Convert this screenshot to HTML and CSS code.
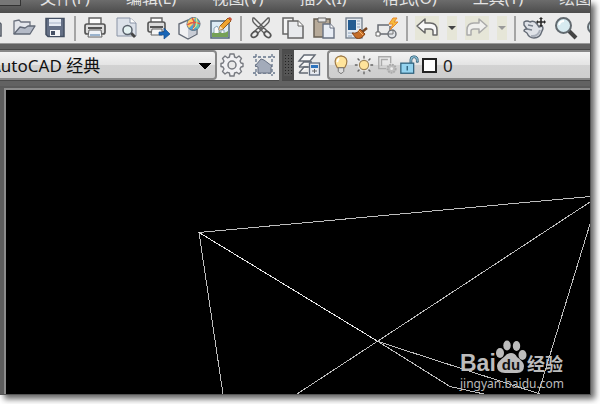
FILE: index.html
```html
<!DOCTYPE html>
<html lang="zh-CN">
<head>
<meta charset="utf-8">
<title>AutoCAD 经典</title>
<link rel="stylesheet" href="styles.css">
</head>
<body>
<main class="window">
  <nav class="menu">
    <span class="menu-handle"></span>
    <a href="#">文件(F)</a><a href="#">编辑(E)</a><a href="#">视图(V)</a><a href="#">插入(I)</a><a href="#">格式(O)</a><a href="#">工具(T)</a><a href="#">绘图(D)</a>
  </nav>

  <div class="toolbar">
    <div class="group group-file">
      <button aria-label="新建"><svg viewBox="0 0 24 24"><path d="M8 3h8l5 5v12H8z" fill="#d8dce2" stroke="#535a66" stroke-width="1.5"/></svg></button>
      <button aria-label="打开"><svg viewBox="0 0 24 24"><path d="M2 18V5l5-1 2 2h9v5" fill="#e4e6ec" stroke="#6d7380" stroke-width="1.3"/><path d="M2 18 8 11l5 1 3-2h7l-5 8z" fill="#b4bac7" stroke="#626977" stroke-width="1.3" stroke-linejoin="round"/></svg></button>
      <button aria-label="保存"><svg viewBox="0 0 24 24"><path d="M3 2.500h18v18H5l-2-2z" fill="#657086" stroke="#444f62" stroke-width="1.5"/><path d="M6 3h12v7H6z" fill="#e6ebf3"/><path d="M6 7h12" stroke="#a9b4c8"/><path d="M7 14h10v6H7z" fill="#f4f5f7"/><path d="M8 15h4v4H8z" fill="#465165"/></svg></button>
    </div>
    <i class="sep"></i>
    <div class="group group-output">
      <button aria-label="打印"><svg viewBox="0 0 24 24"><path d="M6 10V2h12v8" fill="#fcfcfc" stroke="#646464" stroke-width="1.4"/><rect x="2" y="8" width="20" height="10" rx="2" fill="#dedede" stroke="#555" stroke-width="1.7"/><path d="M5 12h14" stroke="#555" stroke-width="2"/><path d="M6 14h12l1 7H5z" fill="#f1f4f8" stroke="#626262"/><path d="M7 18h10v2H7z" fill="#9bb4ce"/></svg></button>
      <button aria-label="打印预览"><svg viewBox="0 0 24 24"><path d="M2 2h13l6 5v13H2z" fill="#dce1e9" stroke="#8993a5"/><path d="M15 2v5h6" fill="#fff" stroke="#8993a5"/><path d="m16 17 4 4" stroke="#444" stroke-width="2.800"/><circle cx="12.500" cy="14" r="4.500" fill="#e4f1f1" stroke="#59616b" stroke-width="1.500"/></svg></button>
      <button aria-label="发布"><svg viewBox="0 0 24 24"><path d="M5 7V2h11v5" fill="#fff" stroke="#666" stroke-width="1.400"/><rect x="2" y="6" width="17" height="10" rx="2" fill="#dcdcdc" stroke="#555" stroke-width="1.600"/><path d="M4 11h13" stroke="#555" stroke-width="2"/><path d="M6 13h10v6H5z" fill="#f6f6f6" stroke="#666"/><path d="M13 16h5v-4l6 6-6 5v-4h-5z" fill="#1765b7" stroke="#174f8d" stroke-width=".7"/></svg></button>
      <button aria-label="三维打印"><svg viewBox="0 0 24 24"><path d="m1 8 9-4 9 5v9l-9 5-9-5z" fill="#f1f1f3" stroke="#666d79" stroke-width="1.400"/><path d="M10 12v10l8-4v-8z" fill="#c8ccd5"/><circle cx="15.500" cy="8" r="6.500" fill="#4ea2d5" stroke="#567588"/><path d="M10 5q4-4 7-3l-2 6-4 4-2-3z" fill="#ffcd65"/><path d="m18 2 4 5-2 6-5-3z" fill="#65c6b1"/><path d="M9 9q7-5 13-1M14 2q4 5 1 12" fill="none" stroke="#de5747" stroke-width="1.400"/><path d="M18 2q3 7-3 11" fill="none" stroke="#fff27a"/></svg></button>
      <button aria-label="标记"><svg viewBox="0 0 24 24"><rect x="2" y="5" width="18" height="17" fill="#dcebf5" stroke="#526778" stroke-width="1.500"/><path d="M3 17q5-3 9-1t7-1v6H3z" fill="#75a157"/><path d="M5 17v-5l3-2 2 3v4m2 0v-3h3v3" fill="#f9f9f9" stroke="#8ba6b8"/><path d="m10 14 1-4L19 2l3 3-8 8z" fill="#efa431" stroke="#965b1a"/><path d="m19 2 3 3 1-2-2-2z" fill="#c7523b"/><path d="m10 14 1-4 3 3z" fill="#f7dfb8"/></svg></button>
    </div>
    <i class="sep"></i>
    <div class="group group-clipboard">
      <button aria-label="剪切"><svg viewBox="0 0 24 24"><path d="M4 2q-1 3 1 5l11 11 3-2L5 2zm16 0q1 3-1 5L8 18l-3-2L19 2z" fill="#eee" stroke="#5d5d5d" stroke-width="1.300"/><ellipse cx="5.500" cy="18.500" rx="3.500" ry="2.500" transform="rotate(-40 5.500 18.500)" fill="#eee" stroke="#555" stroke-width="1.800"/><ellipse cx="18.500" cy="18.500" rx="3.500" ry="2.500" transform="rotate(40 18.500 18.500)" fill="#eee" stroke="#555" stroke-width="1.800"/><circle cx="12" cy="12.500" r="2" fill="#666"/></svg></button>
      <button aria-label="复制"><svg viewBox="0 0 24 24"><path d="M2 2h10v16H2z" fill="#f4f4f4" stroke="#666" stroke-width="1.500"/><path d="M7 5h10l5 5v12H7z" fill="#e8eaed" stroke="#666" stroke-width="1.500"/><path d="M17 5v5h5" fill="#fff" stroke="#666"/></svg></button>
      <button aria-label="粘贴"><svg viewBox="0 0 24 24"><rect x="2" y="3" width="16" height="18" fill="#b7aa99" stroke="#686055" stroke-width="1.500"/><path d="M6 6V2h8v4z" fill="#e6e6e6" stroke="#666"/><path d="M11 8h7l4 4v10H11z" fill="#e8edf5" stroke="#687181" stroke-width="1.400"/><path d="M18 8v4h4" fill="#fff" stroke="#687181"/></svg></button>
      <button aria-label="特性匹配"><svg viewBox="0 0 24 24"><rect x="2" y="2" width="16" height="20" fill="#e3e9f0" stroke="#707b88" stroke-width="1.300"/><path d="M4 4h8v10H4z" fill="#235b91"/><path d="M13 5h3m-3 3h3m-3 3h3M4 17h6m-6 3h4" stroke="#8ca2bb"/><path d="m23 12-5 4" stroke="#744523" stroke-width="2.500"/><path d="M8 17q6 1 8-4l5 5q-4 6-9 4z" fill="#c66e29" stroke="#834319"/><path d="m14 14 5 5" stroke="#f6b970"/></svg></button>
      <button aria-label="块编辑器"><svg viewBox="0 0 24 24"><path d="M14 9H3v9h10M15 10v5" fill="none" stroke="#686c74" stroke-width="1.500"/><path d="M1 16h4v4H1z" fill="#fff" stroke="#666"/><circle cx="17" cy="18" r="4" fill="#e1e4e8" stroke="#6c7178" stroke-width="1.400"/><path d="M13 18h5v-4" fill="none" stroke="#777"/><path d="m18 2-4 6h4l-3 6 8-8h-4l3-4z" fill="#f6bd3d" stroke="#e8872b"/></svg></button>
    </div>
    <i class="sep"></i>
    <div class="group group-history">
      <button class="tint" aria-label="放弃"><svg viewBox="0 0 24 24"><path d="m2 10 8-7v4h5q7 0 7 7v5h-4v-4q0-2-3-2h-5v4z" fill="#f8f8f8" stroke="#686868" stroke-width="1.500" stroke-linejoin="round"/></svg></button>
      <button class="tint more" aria-label="放弃列表"><svg viewBox="0 0 10 24"><path d="M1 10h8l-4 4z" fill="#444"/></svg></button>
      <button class="tint" aria-label="重做"><svg viewBox="0 0 24 24"><path d="m22 10-8-7v4H9q-7 0-7 7v5h4v-4q0-2 3-2h5v4z" fill="#f0f0ee" stroke="#aaa" stroke-width="1.500" stroke-linejoin="round"/></svg></button>
      <button class="tint more" aria-label="重做列表"><svg viewBox="0 0 10 24"><path d="M1 10h8l-4 4z" fill="#999"/></svg></button>
    </div>
    <i class="sep"></i>
    <div class="group group-view">
      <button aria-label="平移"><svg viewBox="0 0 24 24"><path d="M1 6q3-2 6 0 4-2 7 2l2 3 3-1q2 2 0 5-2 7-8 7-5 0-7-5l-3-2q0-2 3-2L1 9z" fill="#dfe2e8" stroke="#646b76" stroke-width="1.400" stroke-linejoin="round"/><path d="m5 9 5 1M4 13l5 1" fill="none" stroke="#777f8b" stroke-width="1.300"/><path d="M8 20q7 1 9-6" fill="none" stroke="#aab0bb" stroke-width="2"/><path d="M18 2v8m-4-4h8" stroke="#292929" stroke-width="1.600"/><path d="m18 1-2 2h4zm0 10-2-2h4zm-5-5 2-2v4zm10 0-2-2v4z" fill="#292929"/></svg></button>
      <button aria-label="实时缩放"><svg viewBox="0 0 24 24"><path d="m15 15 7 7" stroke="#444" stroke-width="4"/><circle cx="9.500" cy="9.500" r="7.500" fill="#d7eaf0" stroke="#626a70" stroke-width="2"/><path d="M5 9q1-4 5-4" fill="none" stroke="#fff" stroke-width="2"/></svg></button>
      <button aria-label="窗口缩放"><svg viewBox="0 0 24 24"><circle cx="9.500" cy="11" r="6.500" fill="#d7eaf0" stroke="#626a70" stroke-width="2"/></svg></button>
    </div>
  </div>

  <div class="palette-row">
    <section class="palette">
      <select class="workspace" aria-label="工作空间"><option>AutoCAD 经典</option></select>
      <button aria-label="工作空间设置"><svg viewBox="0 0 24 24"><path d="m10 1 4 0 .6 3 2 .8L19 3l2.500 2.500L20 8l1 2 2 .5v3L21 14l-1 2 1.500 2.500L19 21l-2.400-1.700-2 .7-.6 3h-4l-.6-3-2-.7L5 21l-2.500-2.500L4 16l-1-2-2-.5v-3L3 10l1-2-1.500-2.500L5 3l2.400 1.800 2-.8z" fill="#f1f1f3" stroke="#777a80" stroke-width="1.400" stroke-linejoin="round"/><circle cx="12" cy="12" r="4" fill="#e9e9e9" stroke="#777a80" stroke-width="1.500"/></svg></button>
      <button aria-label="我的工作空间"><svg viewBox="0 0 24 24"><path d="M4 1v22M20 1v22M1 4h22M1 20h22" stroke="#64748a" stroke-width="1.300" stroke-dasharray="3 2"/><path d="m3 13 6-7 3 1 8 6-1 1v6H6v-6z" fill="#a3abba" stroke="#687284"/></svg></button>
    </section>
    <section class="palette palette-layers">
      <span class="grip"></span>
      <button aria-label="图层特性"><svg viewBox="0 0 24 24"><path d="m2 8 5-6h11l-5 6zm0 6 5-5h8m-13 11 5-6h6M2 20h9" fill="#f9f9f9" stroke="#646b75" stroke-width="1.400"/><path d="M2 14h9" stroke="#646b75" stroke-width="1.400"/><rect x="12.500" y="10" width="10" height="12" fill="#e7eaf0" stroke="#5f6b7e" stroke-width="1.300"/><path d="M14 12h7v3h-7z" fill="#2f74be"/><path d="M15 18h5m-2.500-2v4" stroke="#666"/></svg></button>
      <div class="layer-box">
        <svg viewBox="0 0 24 24"><path d="M8 15q-1-2-2-4-2-8 6-9 8 1 6 9-1 2-2 4z" fill="#ffe49b" stroke="#9b7745" stroke-width="1.200"/><path d="M9 15h6v4l-2 2h-2l-2-2z" fill="#ddd" stroke="#6b6b6b"/><path d="M10 5q-2 1-2 4" fill="none" stroke="#fff" stroke-width="2"/></svg>
        <svg viewBox="0 0 24 24"><path d="M12 2v20M2 12h20M5 5l14 14M19 5 5 19" stroke="#666" stroke-width="1.500"/><circle cx="12" cy="12" r="7" fill="#e8e8e8"/><circle cx="12" cy="12" r="5" fill="#ffe39a" stroke="#9d8356" stroke-width="1.200"/></svg>
        <svg viewBox="0 0 24 24"><path d="M11 16H3V3h13v7M6 13V6h7" fill="none" stroke="#aaa" stroke-width="1.500"/><circle cx="17" cy="16" r="4.500" fill="#bdbdbd" stroke="#aaa" stroke-width="2" stroke-dasharray="2 1"/><circle cx="17" cy="16" r="1.500" fill="#eee"/></svg>
        <svg viewBox="0 0 24 24"><path d="M12 11V6q0-4 4-4 5 0 5 5v2h-2V7q0-3-2.500-3T14 7v4" fill="#91c8df" stroke="#39647b"/><rect x="2" y="10" width="14" height="11" fill="#94d3ef" stroke="#31647f" stroke-width="1.400"/><path d="M9 13v5" stroke="#31647f" stroke-width="1.500"/></svg>
        <span class="swatch"></span>
        <select class="layer" aria-label="图层"><option>0</option></select>
      </div>
    </section>
  </div>

  <div class="drawing">
    <svg class="lines" viewBox="6 90 584 304" preserveAspectRatio="xMinYMin slice">
      <path d="M590 196.500 199 232.500 223 394M199 232.500 378 341.500 450 386.500 484 394M378 341.500 540 394M590 202 297 394M590 224 538 394"/>
      <path class="bright" d="m199 232.500 179 109"/>
    </svg>
    <div class="watermark">
      <div class="brand">
        <span class="bai">Bai</span>
        <svg class="paw" viewBox="0 0 32 34"><ellipse cx="5" cy="13" rx="4" ry="5"/><ellipse cx="12" cy="5.500" rx="3.700" ry="5"/><ellipse cx="21.500" cy="6" rx="3.700" ry="5"/><ellipse cx="27.500" cy="15" rx="4" ry="5"/><path d="M16 13q4 0 6 4 7 5 7 9 0 7-7 7H10q-8 0-8-7 0-4 7-9 3-4 7-4z"/><text x="16" y="30" text-anchor="middle">du</text></svg>
        <span class="jingyan">经验</span>
      </div>
      <div class="url">jingyan.baidu.com</div>
    </div>
  </div>
</main>
</body>
</html>
```
FILE: styles.css
```css
* { box-sizing: border-box; }

body {
  margin: 0;
  height: 100vh;
  padding: 0 9px 9px 0;
  overflow: hidden;
  background: #fff;
  font-family: "Noto Sans", "Noto Sans CJK SC", sans-serif;
}

.window {
  display: flex;
  flex-direction: column;
  height: 100%;
  overflow: hidden;
  background: #5d5d5d;
  border-right: 1px solid #555;
  border-bottom: 1px solid #555;
  box-shadow: 4px 4px 6px rgba(0, 0, 0, .6);
}

.menu {
  display: flex;
  flex: none;
  gap: 36px;
  height: 13px;
  overflow: hidden;
  white-space: nowrap;
  background: linear-gradient(#6c6c6c, #4c4c4c);
}

.menu a {
  flex: none;
  margin-top: -14px;
  color: #e4e4e4;
  font-size: 16px;
  line-height: 24px;
  text-decoration: none;
}

.menu-handle {
  flex: none;
  width: 21px;
  height: 6px;
  margin-right: -17px;
  border: solid #333;
  border-width: 0 1px 1px 0;
  background: #777;
}

.toolbar {
  display: flex;
  flex: none;
  align-items: center;
  height: 31px;
  overflow: hidden;
  background: #ebebeb;
  border-bottom: 1px solid #999;
}

button {
  flex: none;
  width: 24px;
  height: 24px;
  padding: 0;
  border: 0;
  background: none;
}

button svg, .layer-box svg {
  display: block;
  width: 100%;
  height: 24px;
}

.group {
  display: flex;
  flex: none;
  justify-content: space-between;
}

.group-file { width: 87px; margin-left: -20px; }
.group-output, .group-clipboard { width: 150px; }
.group-history { gap: 8px; }
.group-view { gap: 7px; }

.tint { background: #e6e6d8; }
.more { width: 10px; }

.sep {
  flex: none;
  width: 2px;
  height: 25px;
  margin: 0 7px;
  background: #a5a5a5;
}

.palette-row {
  display: flex;
  flex: none;
  gap: 3px;
  padding: 5px 0;
  background: #626262;
  border-bottom: 2px solid #5a5a5a;
}

.palette {
  display: flex;
  flex: none;
  align-items: center;
  gap: 8px;
  height: 32px;
  padding-right: 3px;
  background: #ebebeb;
  border: solid #494949;
  border-width: 1px 0;
}

.workspace {
  appearance: none;
  width: 231px;
  height: 30px;
  margin: 0 -5px 0 -14px;
  padding: 0 0 0 2px;
  border: 2px solid #888;
  border-radius: 4px;
  color: #111;
  font: 17px "Noto Sans", "Noto Sans CJK SC", sans-serif;
  background: conic-gradient(from -45deg at 50% 100%, #000 90deg, transparent 0) calc(100% - 4px) 11px / 12px 6px no-repeat,
    linear-gradient(#f3f3f3, #e4e4e4 50%, #d2d2d2 51%, #cecece);
}

.palette-layers {
  flex: 1;
  gap: 0;
  padding: 0;
}

.grip {
  flex: none;
  width: 12px;
  height: 30px;
  margin-right: 3px;
  border: solid #4d4d4d;
  border-width: 4px 2px;
  background: radial-gradient(circle, #222 1px, #555 1px) 0 0 / 3px 3px;
}

.layer-box {
  display: flex;
  flex: 1;
  align-items: center;
  height: 30px;
  margin-left: 6px;
  padding-left: 1px;
  border: 2px solid #888;
  border-right: 0;
  border-radius: 4px 0 0 4px;
  background: linear-gradient(#f3f3f3, #e4e4e4 50%, #d2d2d2 51%, #cecece);
}

.layer-box svg {
  flex: none;
  width: 22px;
  height: 22px;
  margin-right: 1px;
}

.swatch {
  flex: none;
  width: 15px;
  height: 15px;
  border: 2px solid #222;
  background: #fff;
}

.layer {
  appearance: none;
  flex: 1;
  padding: 0 0 0 6px;
  border: 0;
  color: #222;
  font: 17px "Noto Sans", sans-serif;
  background: none;
}

.drawing {
  position: relative;
  flex: 1;
  min-height: 0;
  margin-left: 4px;
  overflow: hidden;
  background: #000;
  border: solid #8c8c8c;
  border-width: 2px 0 0 2px;
}

.lines {
  display: block;
  width: 100%;
  height: 100%;
}

.lines path {
  fill: none;
  stroke: #bdbdbd;
  stroke-width: 1;
  shape-rendering: crispEdges;
}

.lines .bright { stroke: #e8e8e8; }

.watermark {
  position: absolute;
  right: 23px;
  bottom: 0;
  width: 107px;
  color: #bcbcbc;
}

.brand {
  display: flex;
  align-items: flex-end;
  height: 34px;
}

.bai {
  width: 35px;
  font: bold 23px/22px "Liberation Sans", sans-serif;
}

.paw {
  flex: none;
  width: 32px;
  height: 34px;
  fill: #bcbcbc;
}

.paw text {
  fill: #111;
  font: bold 15px "Liberation Sans", sans-serif;
}

.jingyan {
  font: bold 18px/22px "Noto Sans CJK SC", sans-serif;
}

.url {
  font-size: 12px;
  line-height: 20px;
}
```
